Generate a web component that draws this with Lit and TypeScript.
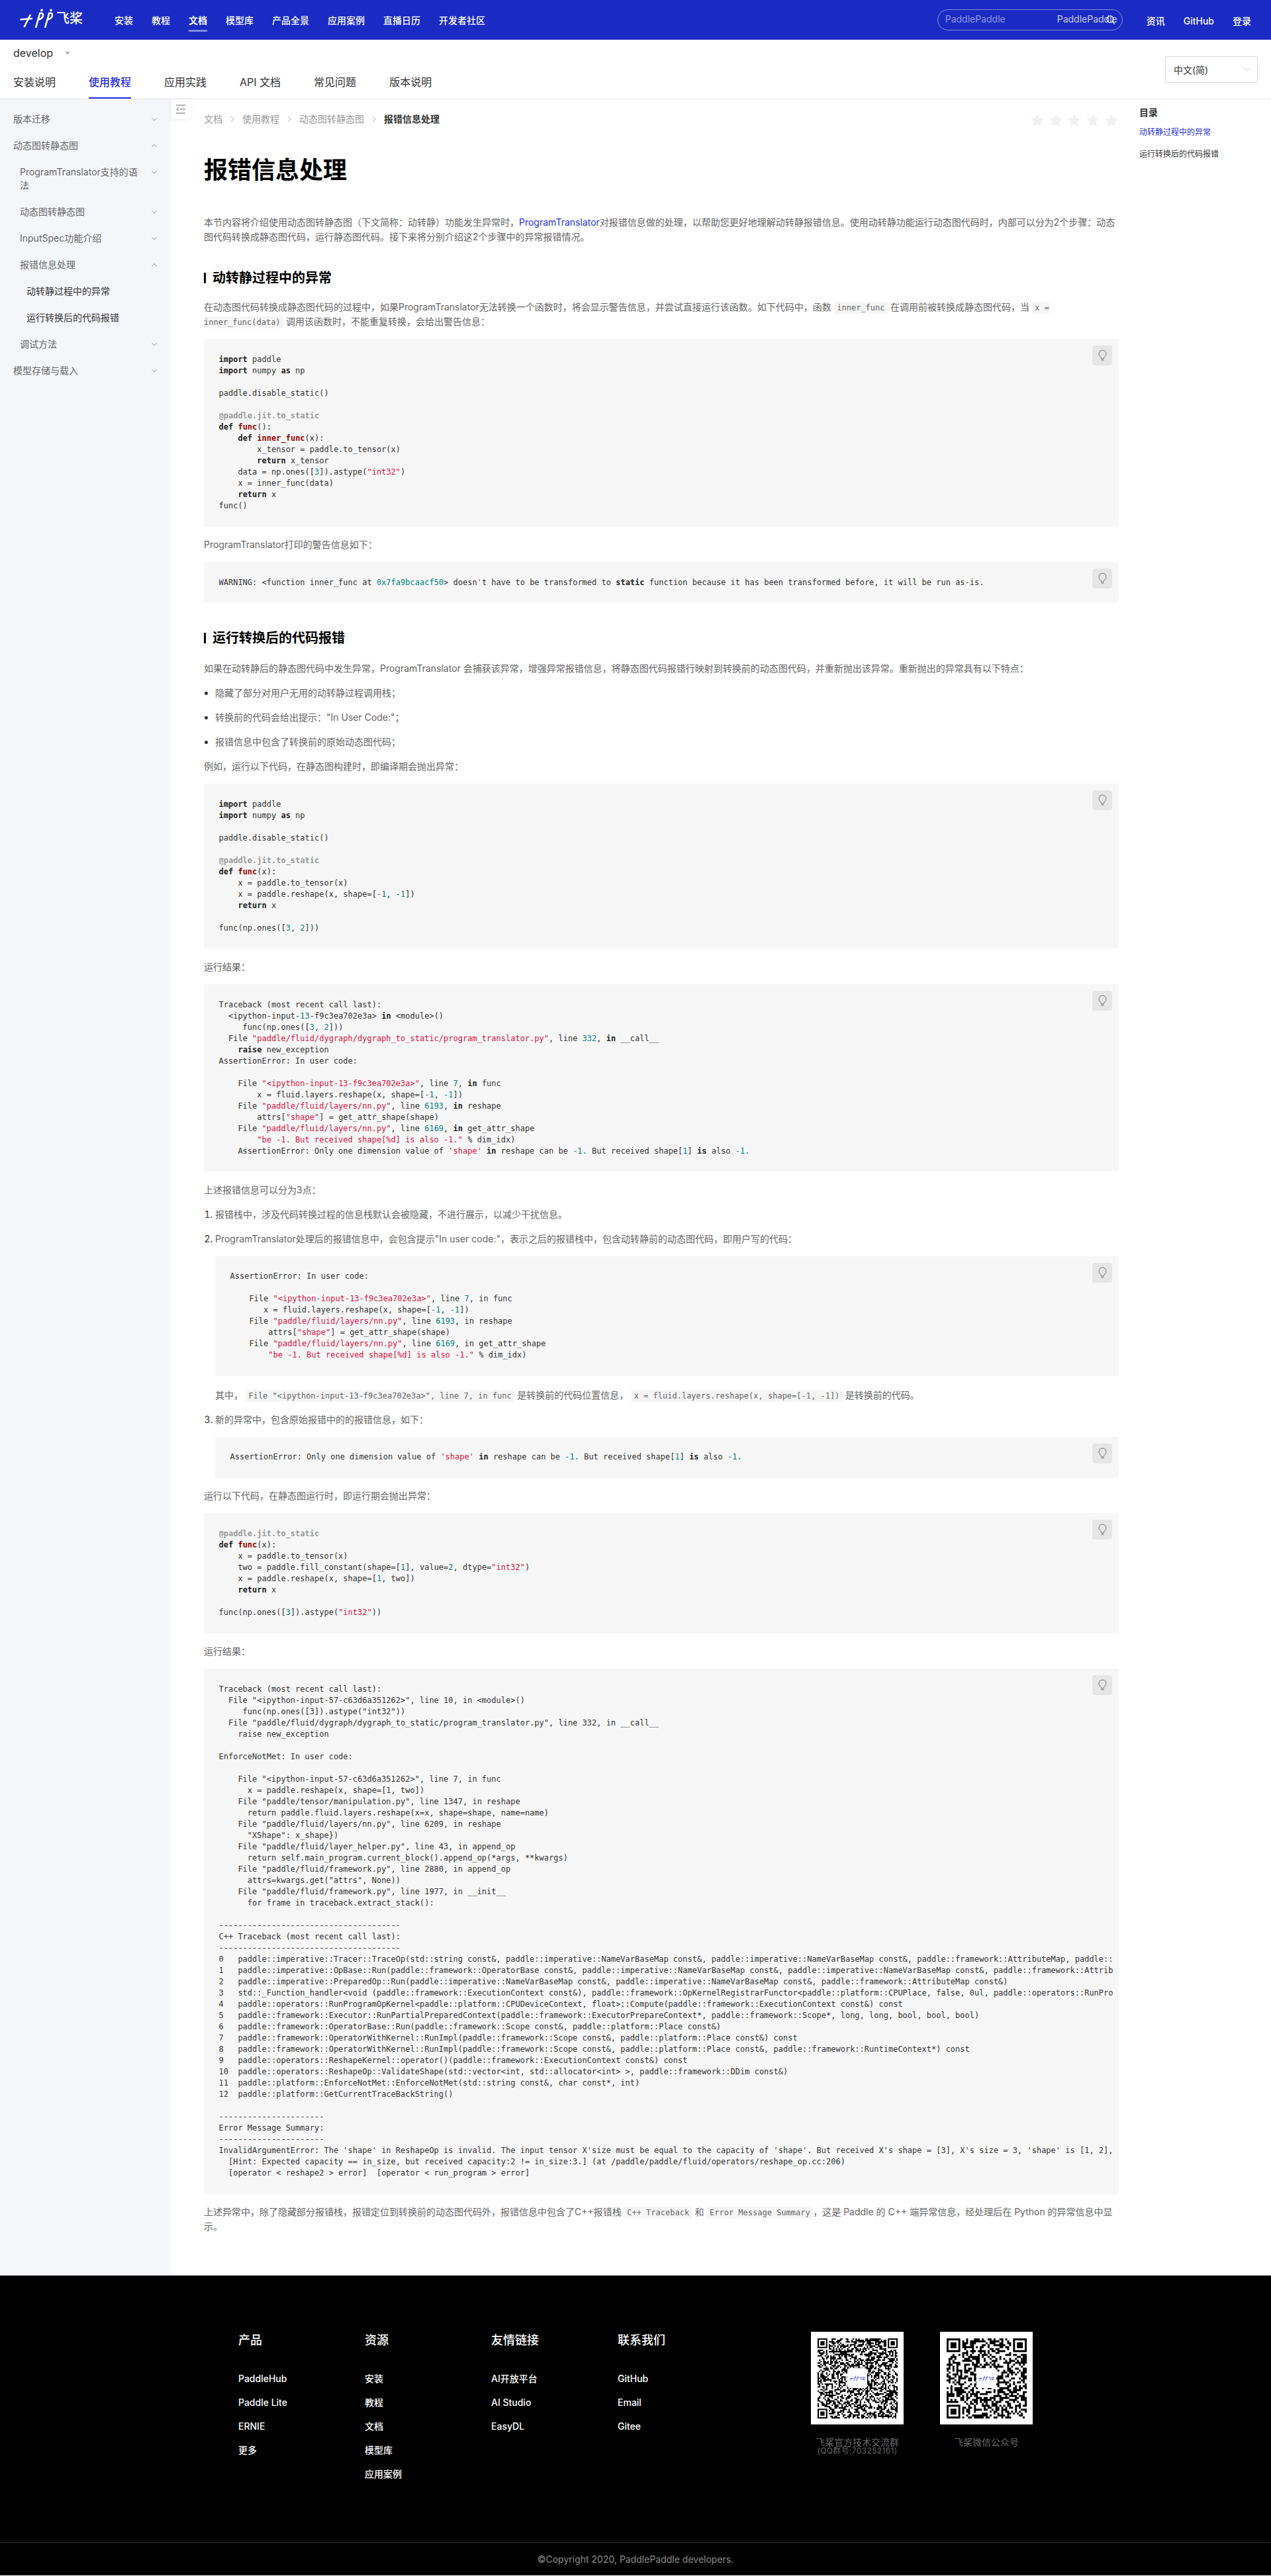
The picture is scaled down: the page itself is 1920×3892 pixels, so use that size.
import { LitElement, html, css, svg } from "lit";
import { customElement } from "lit/decorators.js";

const hl = (src: string) => {
  const out: unknown[] = [];
  const re = /‹(\w)\|([^›]*)›/g;
  let last = 0;
  let m: RegExpExecArray | null;
  while ((m = re.exec(src))) {
    out.push(src.slice(last, m.index));
    out.push(html`<span class=${m[1]}>${m[2]}</span>`);
    last = m.index + m[0].length;
  }
  out.push(src.slice(last));
  return out;
};

const qrPath = (n: number, seed: number) => {
  let s = seed;
  const rnd = () => {
    s = (s + 0x6d2b79f5) | 0;
    let t = Math.imul(s ^ (s >>> 15), 1 | s);
    t = (t + Math.imul(t ^ (t >>> 7), 61 | t)) ^ t;
    return ((t ^ (t >>> 14)) >>> 0) / 4294967296;
  };
  const inFinder = (x: number, y: number, ox: number, oy: number) =>
    x >= ox - 1 && x <= ox + 7 && y >= oy - 1 && y <= oy + 7;
  const finderOn = (x: number, y: number, ox: number, oy: number) => {
    const dx = x - ox, dy = y - oy;
    if (dx < 0 || dy < 0 || dx > 6 || dy > 6) return false;
    const ring = dx === 0 || dy === 0 || dx === 6 || dy === 6;
    const core = dx >= 2 && dx <= 4 && dy >= 2 && dy <= 4;
    return ring || core;
  };
  const origins = [[0, 0], [n - 7, 0], [0, n - 7]];
  let d = "";
  for (let y = 0; y < n; y++) {
    for (let x = 0; x < n; x++) {
      const f = origins.find(([a, b]) => inFinder(x, y, a, b));
      const on = f ? finderOn(x, y, f[0], f[1]) : rnd() > 0.5;
      if (on) d += `M${x} ${y}h1v1h-1z`;
    }
  }
  return d;
};

const QR1 = qrPath(57, 7);
const QR2 = qrPath(41, 23);

const chev = (up = false) => html`<svg class="chev" viewBox="0 0 8 20" width="8" height="20"><path d=${up ? "M.5 12 4 8.500 7.500 12" : "M.5 8.500 4 12 7.500 8.500"} fill="none" stroke="#b5b8c0" stroke-width="1.200"/></svg>`;
const crumbSep = html`<svg viewBox="0 0 6 10" width="6" height="10"><path d="M1 1l4 4-4 4" fill="none" stroke="#aaa" stroke-width="1"/></svg>`;
const star = html`<svg viewBox="0 0 20 20" width="20" height="20"><path d="M10 .500l2.900 6.300 6.800.800-5 4.700 1.300 6.800-6-3.400-6 3.400 1.300-6.800-5-4.700 6.800-.800z" fill="#f0f0f0"/></svg>`;
const bulb = html`<svg viewBox="0 0 15 18" width="15" height="18"><path d="M7.500 1A5.500 5.500 0 0 0 4.300 11c.8.600 1.200 1.300 1.200 2.200v.8h4v-.8c0-.9.400-1.600 1.200-2.200A5.500 5.500 0 0 0 7.500 1z" fill="none" stroke="#777" stroke-width="1"/><path d="M5.500 16h4" stroke="#777" stroke-width="1.200"/></svg>`;

const CODE_1 = `‹k|import› paddle
‹k|import› numpy ‹k|as› np

paddle.disable_static()

‹d|@paddle.jit.to_static›
‹k|def› ‹f|func›():
    ‹k|def› ‹f|inner_func›(x):
        x_tensor = paddle.to_tensor(x)
        ‹k|return› x_tensor
    data = np.ones([‹n|3›]).astype(‹s|"int32"›)
    x = inner_func(data)
    ‹k|return› x
func()`;
const CODE_2 = `WARNING: <function inner_func at ‹n|0x7fa9bcaacf50›> doesn‹s|'›t have to be transformed to ‹k|static› function because it has been transformed before, it will be run as-is.`;
const CODE_3 = `‹k|import› paddle
‹k|import› numpy ‹k|as› np

paddle.disable_static()

‹d|@paddle.jit.to_static›
‹k|def› ‹f|func›(x):
    x = paddle.to_tensor(x)
    x = paddle.reshape(x, shape=[‹n|-1›, ‹n|-1›])
    ‹k|return› x

func(np.ones([‹n|3›, ‹n|2›]))`;
const CODE_4 = `Traceback (most recent call last):
  <ipython-input-‹n|13›-f9c3ea702e3a> ‹k|in› <module>()
     func(np.ones([‹n|3›, ‹n|2›]))
  File ‹s|"paddle/fluid/dygraph/dygraph_to_static/program_translator.py"›, line ‹n|332›, ‹k|in› __call__
    ‹k|raise› new_exception
AssertionError: In user code:

    File ‹s|"<ipython-input-13-f9c3ea702e3a>"›, line ‹n|7›, ‹k|in› func
        x = fluid.layers.reshape(x, shape=[‹n|-1›, ‹n|-1›])
    File ‹s|"paddle/fluid/layers/nn.py"›, line ‹n|6193›, ‹k|in› reshape
        attrs[‹s|"shape"›] = get_attr_shape(shape)
    File ‹s|"paddle/fluid/layers/nn.py"›, line ‹n|6169›, ‹k|in› get_attr_shape
        ‹s|"be -1. But received shape[%d] is also -1."› % dim_idx)
    AssertionError: Only one dimension value of ‹s|'shape'› ‹k|in› reshape can be ‹n|-1.› But received shape[‹n|1›] ‹k|is› also ‹n|-1.›`;
const CODE_5 = `AssertionError: In user code:

    File ‹s|"<ipython-input-13-f9c3ea702e3a>"›, line ‹n|7›, in func
       x = fluid.layers.reshape(x, shape=[‹n|-1›, ‹n|-1›])
    File ‹s|"paddle/fluid/layers/nn.py"›, line ‹n|6193›, in reshape
        attrs[‹s|"shape"›] = get_attr_shape(shape)
    File ‹s|"paddle/fluid/layers/nn.py"›, line ‹n|6169›, in get_attr_shape
        ‹s|"be -1. But received shape[%d] is also -1."› % dim_idx)`;
const CODE_6 = `AssertionError: Only one dimension value of ‹s|'shape'› ‹k|in› reshape can be ‹n|-1.› But received shape[‹n|1›] ‹k|is› also ‹n|-1.›`;
const CODE_7 = `‹d|@paddle.jit.to_static›
‹k|def› ‹f|func›(x):
    x = paddle.to_tensor(x)
    two = paddle.fill_constant(shape=[‹n|1›], value=‹n|2›, dtype=‹s|"int32"›)
    x = paddle.reshape(x, shape=[‹n|1›, two])
    ‹k|return› x

func(np.ones([‹n|3›]).astype(‹s|"int32"›))`;
const CODE_8 = `Traceback (most recent call last):
  File "<ipython-input-57-c63d6a351262>", line 10, in <module>()
     func(np.ones([3]).astype("int32"))
  File "paddle/fluid/dygraph/dygraph_to_static/program_translator.py", line 332, in __call__
    raise new_exception

EnforceNotMet: In user code:

    File "<ipython-input-57-c63d6a351262>", line 7, in func
      x = paddle.reshape(x, shape=[1, two])
    File "paddle/tensor/manipulation.py", line 1347, in reshape
      return paddle.fluid.layers.reshape(x=x, shape=shape, name=name)
    File "paddle/fluid/layers/nn.py", line 6209, in reshape
      "XShape": x_shape})
    File "paddle/fluid/layer_helper.py", line 43, in append_op
      return self.main_program.current_block().append_op(*args, **kwargs)
    File "paddle/fluid/framework.py", line 2880, in append_op
      attrs=kwargs.get("attrs", None))
    File "paddle/fluid/framework.py", line 1977, in __init__
      for frame in traceback.extract_stack():

--------------------------------------
C++ Traceback (most recent call last):
--------------------------------------
0   paddle::imperative::Tracer::TraceOp(std::string const&, paddle::imperative::NameVarBaseMap const&, paddle::imperative::NameVarBaseMap const&, paddle::framework::AttributeMap, paddle::platform::Place, bool)
1   paddle::imperative::OpBase::Run(paddle::framework::OperatorBase const&, paddle::imperative::NameVarBaseMap const&, paddle::imperative::NameVarBaseMap const&, paddle::framework::AttributeMap const&, paddle::platform::Place const&)
2   paddle::imperative::PreparedOp::Run(paddle::imperative::NameVarBaseMap const&, paddle::imperative::NameVarBaseMap const&, paddle::framework::AttributeMap const&)
3   std::_Function_handler<void (paddle::framework::ExecutionContext const&), paddle::framework::OpKernelRegistrarFunctor<paddle::platform::CPUPlace, false, 0ul, paddle::operators::RunProgramOpKernel<paddle::platform::CPUDeviceContext, float> >::operator()(char const*, char const*, int) const
4   paddle::operators::RunProgramOpKernel<paddle::platform::CPUDeviceContext, float>::Compute(paddle::framework::ExecutionContext const&) const
5   paddle::framework::Executor::RunPartialPreparedContext(paddle::framework::ExecutorPrepareContext*, paddle::framework::Scope*, long, long, bool, bool, bool)
6   paddle::framework::OperatorBase::Run(paddle::framework::Scope const&, paddle::platform::Place const&)
7   paddle::framework::OperatorWithKernel::RunImpl(paddle::framework::Scope const&, paddle::platform::Place const&) const
8   paddle::framework::OperatorWithKernel::RunImpl(paddle::framework::Scope const&, paddle::platform::Place const&, paddle::framework::RuntimeContext*) const
9   paddle::operators::ReshapeKernel::operator()(paddle::framework::ExecutionContext const&) const
10  paddle::operators::ReshapeOp::ValidateShape(std::vector<int, std::allocator<int> >, paddle::framework::DDim const&)
11  paddle::platform::EnforceNotMet::EnforceNotMet(std::string const&, char const*, int)
12  paddle::platform::GetCurrentTraceBackString()

----------------------
Error Message Summary:
----------------------
InvalidArgumentError: The 'shape' in ReshapeOp is invalid. The input tensor X'size must be equal to the capacity of 'shape'. But received X's shape = [3], X's size = 3, 'shape' is [1, 2], the capacity of 'shape' is 2.
  [Hint: Expected capacity == in_size, but received capacity:2 != in_size:3.] (at /paddle/paddle/fluid/operators/reshape_op.cc:206)
  [operator < reshape2 > error]  [operator < run_program > error]`;

const NAV = ["安装", "教程", "文档", "模型库", "产品全景", "应用案例", "直播日历", "开发者社区"];
const TABS = ["安装说明", "使用教程", "应用实践", "API 文档", "常见问题", "版本说明"];
const SIDE: { t: string; l: number; up?: boolean; none?: boolean; dark?: boolean }[] = [
  { t: "版本迁移", l: 1 },
  { t: "动态图转静态图", l: 1, up: true },
  { t: "ProgramTranslator支持的语法", l: 2 },
  { t: "动态图转静态图", l: 2 },
  { t: "InputSpec功能介绍", l: 2 },
  { t: "报错信息处理", l: 2, up: true },
  { t: "动转静过程中的异常", l: 3, none: true, dark: true },
  { t: "运行转换后的代码报错", l: 3, none: true, dark: true },
  { t: "调试方法", l: 2 },
  { t: "模型存储与载入", l: 1 },
];
const FOOT = [
  { h: "产品", items: ["PaddleHub", "Paddle Lite", "ERNIE", "更多"] },
  { h: "资源", items: ["安装", "教程", "文档", "模型库", "应用案例"] },
  { h: "友情链接", items: ["AI开放平台", "AI Studio", "EasyDL"] },
  { h: "联系我们", items: ["GitHub", "Email", "Gitee"] },
];

const logoMark = (color: string, w: number, h: number) => html`<svg viewBox="0 0 50 30" width=${w} height=${h}>
  <g fill="none" stroke=${color} stroke-width="2.600">
    <path d="M.5 16.500 L19 15"/>
    <path d="M6.500 28 L16 9"/>
    <path d="M24 29 L30 8"/>
    <path d="M29 7.500 C37 4 38 14 27 17"/>
    <path d="M38 29 L44 8"/>
    <path d="M43 7.500 C51 4 52 14 41 17"/>
  </g>
  <circle cx="33" cy="2.500" r="1.900" fill=${color}/>
  <circle cx="47" cy="2.500" r="1.900" fill=${color}/>
</svg>`;

const qrCard = (d: string, n: number, lines: string[]) => html`<div class="qr">
  <div class="qr-box">
    <svg class="qr-svg" viewBox="0 0 ${n} ${n}" width="121" height="121">${svg`<path d=${d} fill="#000"/>`}</svg>
    <div class="qr-logo">${logoMark("#2932e1", 14, 9)}<span class="qr-logo-t">飞桨</span></div>
  </div>
  <div class="qr-cap">${lines[0]}${lines[1] ? html`<div class="qr-sub">${lines[1]}</div>` : ""}</div>
</div>`;

const block = (src: string) => html`<div class="block"><pre>${hl(src)}</pre><div class="bulb">${bulb}</div></div>`;

@customElement("app-root")
export class AppRoot extends LitElement {
  static styles = css`
    :host { display: block; font-family: Inter, "Noto Sans CJK SC", sans-serif; font-size: 14px; color: #666; background: #fff; }
    * { box-sizing: border-box; }
    a { color: inherit; text-decoration: none; }

    .top { height: 60px; background: #1a2bc3; color: #fff; display: flex; align-items: flex-start; padding: 0 30px; }
    .logo { display: flex; align-items: center; gap: 5px; width: 95px; height: 56px; margin-right: 48px; }
    .logo-t { font-size: 20px; line-height: 30px; font-weight: 500; white-space: nowrap; }
    .nav { display: flex; gap: 28px; font-weight: 500; }
    .nav a { padding: 21px 0 4px; line-height: 20px; border-bottom: 3px solid transparent; }
    .nav a.on { border-bottom-color: rgba(255,255,255,.45); font-weight: 600; }
    .spacer { flex: 1; }
    .search { position: relative; width: 280px; height: 32px; margin-top: 14px; border: 1px solid rgba(255,255,255,.45); border-radius: 16px; margin-right: 36px; padding-left: 11px; line-height: 28px; color: rgba(255,255,255,.5); }
    .search-v { position: absolute; left: 180px; top: 0; line-height: 28px; color: #c9cbe0; }
    .search-i { position: absolute; left: 254px; top: 8px; }
    .right { display: flex; gap: 28px; font-weight: 500; padding-top: 22px; line-height: 20px; }

    .sub { height: 90px; display: flex; justify-content: space-between; border-bottom: 1px solid #e5e5e5; padding: 0 20px; }
    .ver { display: flex; align-items: center; height: 20px; margin: 10px 0 23px; font-size: 16px; color: #333; }
    .ver i { width: 0; height: 0; margin-left: 18px; border: 4px solid transparent; border-top: 5px solid #bbb; border-bottom: 0; }
    .tabs { display: flex; gap: 50px; font-size: 16px; color: #333; }
    .tabs a { height: 36px; line-height: 22px; border-bottom: 2px solid transparent; }
    .tabs a.on { color: #2932e1; border-bottom-color: #2932e1; font-weight: 500; }
    .lang { width: 140px; height: 40px; margin-top: 25px; border: 1px solid #d9d9d9; border-radius: 2px; display: flex; align-items: center; justify-content: space-between; padding: 0 10px 0 12px; color: #333; }

    .body { display: flex; align-items: stretch; }
    .side { width: 258px; flex: none; background: #f5f6fa; padding-top: 10px; position: relative; }
    .row { display: flex; align-items: flex-start; padding: 10px 21px 10px 20px; line-height: 20px; color: #666; }
    .row.l2 { padding-left: 30px; }
    .row.l3 { padding-left: 40px; }
    .row.dark { color: #333; }
    .row span { flex: 1; min-width: 0; }
    .chev { flex: none; margin-left: 19px; }
    .toggle { position: absolute; left: 258px; top: 0; width: 30px; height: 30px; background: #fff; border-radius: 0 0 4px 0; box-shadow: 0 1px 4px rgba(0,0,0,.1); display: flex; align-items: center; justify-content: center; }

    .main { width: 1432px; flex: none; padding: 20px 0 48px 50px; min-width: 0; }
    .crumbs { display: flex; justify-content: space-between; align-items: center; height: 20px; }
    .crumb { display: flex; align-items: center; gap: 12px; color: #999; line-height: 20px; }
    .crumb b { color: #333; font-weight: 600; }
    .stars { display: flex; gap: 8px; padding-right: 1px; padding-top: 3px; }
    h1 { margin: 42px 0 43px; font-size: 36px; line-height: 50px; font-weight: 700; color: #000; }
    h2 { margin: 37.500px 0 20px; font-size: 20px; line-height: 30px; font-weight: 600; color: #000; display: flex; align-items: center; gap: 10px; }
    h2.first { margin: 36px 0 18px; }
    h2::before { content: ""; width: 3px; height: 16px; background: #000; flex: none; }
    p { margin: 0 0 15px; line-height: 22px; }
    p.where { padding-top: 1px; }
    p a { color: #2932e1; }
    ul, ol { margin: 0; padding: 0 0 0 17px; }
    li { margin: 0 0 15px; line-height: 22px; }
    li::marker { color: #333; }
    code { font-family: "DejaVu Sans Mono", monospace; font-size: 12px; line-height: 1; background: #f5f5f5; border-radius: 3px; padding: 2px 4.500px; color: #666; }

    .block { position: relative; background: #f7f7f7; margin: 15px 0 16.400px; padding: 22.750px 9px 22.750px 22.500px; }
    pre { margin: 0; overflow: hidden; font-family: "DejaVu Sans Mono", monospace; font-size: 12px; line-height: 17px; color: #333; white-space: pre; }
    .k { font-weight: 700; color: #222; }
    .f { font-weight: 700; color: #990000; }
    .d { font-weight: 700; color: #999; }
    .s { color: #dd1144; }
    .n { color: #008080; }
    .bulb { position: absolute; top: 10px; right: 10px; width: 30px; height: 30px; border-radius: 4px; background: #e6e6e6; display: flex; align-items: center; justify-content: center; }

    .toc { flex: 1; padding: 10px 0 0 31px; font-size: 12px; color: #333; }
    .toc-h { font-size: 14px; font-weight: 600; line-height: 20px; margin-bottom: 10px; }
    .toc a { display: block; line-height: 20px; margin-bottom: 13px; }
    .toc a.on { color: #2932e1; }

    .foot { background: #000; color: #fff; }
    .foot-main { height: 404px; padding: 85px 0 0 360px; display: flex; border-bottom: 1px solid #333; }
    .cols { display: flex; width: 865px; }
    .col { width: 191px; }
    .col-h { font-size: 18px; line-height: 26px; font-weight: 500; margin-bottom: 35px; }
    .col a { display: block; line-height: 20px; margin-bottom: 16px; font-weight: 500; }
    .qr { width: 140px; margin-right: 55px; text-align: center; }
    .qr-box { position: relative; width: 140px; height: 140px; background: #fff; display: flex; align-items: center; justify-content: center; }
    .qr-svg { filter: blur(.35px); }
    .qr-logo { position: absolute; left: 55px; top: 55px; width: 30px; height: 30px; background: #fff; border-radius: 4px; box-shadow: 0 0 2px rgba(0,0,0,.25); display: flex; align-items: center; justify-content: center; }
    .qr-logo-t { font-size: 5px; line-height: 9px; color: #2932e1; }
    .qr-cap { margin-top: 20px; color: #666; font-size: 14px; line-height: 13px; white-space: nowrap; }
    .qr-sub { font-size: 12px; letter-spacing: .35px; }
    .copy { height: 48.500px; line-height: 49px; text-align: center; color: #8c8c8c; }
  `;

  render() {
    return html`
      <div class="top">
        <div class="logo">${logoMark("#fff", 50, 30)}<span class="logo-t">飞桨</span></div>
        <nav class="nav">${NAV.map((n) => html`<a class=${n === "文档" ? "on" : ""}>${n}</a>`)}</nav>
        <div class="spacer"></div>
        <div class="search">PaddlePaddle
          <span class="search-v">PaddlePaddle</span>
          <svg class="search-i" viewBox="0 0 14 15" width="14" height="15"><circle cx="6" cy="6" r="5" fill="none" stroke="#fff" stroke-width="1.200"/><path d="M9.700 9.800 13 13.500" stroke="#fff" stroke-width="1.200"/></svg>
        </div>
        <div class="right"><a>资讯</a><a>GitHub</a><a>登录</a></div>
      </div>
      <div class="sub">
        <div>
          <div class="ver">develop<i></i></div>
          <div class="tabs">${TABS.map((t) => html`<a class=${t === "使用教程" ? "on" : ""}>${t}</a>`)}</div>
        </div>
        <div class="lang">中文(简)<svg viewBox="0 0 12 8" width="11" height="8"><path d="M1 1l5 6 5-6" fill="none" stroke="#ccc" stroke-width="1"/></svg></div>
      </div>
      <div class="body">
        <aside class="side">
          ${SIDE.map((s) => html`<div class="row l${s.l} ${s.dark ? "dark" : ""}"><span>${s.t}</span>${s.none ? "" : chev(s.up)}</div>`)}
          <div class="toggle"><svg viewBox="0 0 14 14" width="14" height="14"><path d="M0 1h14M6 7h8M0 13h14" stroke="#999" stroke-width="1.500"/><path d="M4 4.500 1 7l3 2.500" fill="none" stroke="#999" stroke-width="1.200"/></svg></div>
        </aside>
        <main class="main">
          <div class="crumbs">
            <div class="crumb"><span>文档</span>${crumbSep}<span>使用教程</span>${crumbSep}<span>动态图转静态图</span>${crumbSep}<b>报错信息处理</b></div>
            <div class="stars">${[1, 2, 3, 4, 5].map(() => star)}</div>
          </div>
          <h1>报错信息处理</h1>
          <p>本节内容将介绍使用动态图转静态图（下文简称：动转静）功能发生异常时，<a>ProgramTranslator</a>对报错信息做的处理，以帮助您更好地理解动转静报错信息。使用动转静功能运行动态图代码时，内部可以分为2个步骤：动态图代码转换成静态图代码，运行静态图代码。接下来将分别介绍这2个步骤中的异常报错情况。</p>
          <h2 class="first">动转静过程中的异常</h2>
          <p>在动态图代码转换成静态图代码的过程中，如果ProgramTranslator无法转换一个函数时，将会显示警告信息，并尝试直接运行该函数。如下代码中，函数 <code>inner_func</code> 在调用前被转换成静态图代码，当 <code>x = inner_func(data)</code> 调用该函数时，不能重复转换，会给出警告信息：</p>
          ${block(CODE_1)}
          <p>ProgramTranslator打印的警告信息如下：</p>
          ${block(CODE_2)}
          <h2>运行转换后的代码报错</h2>
          <p>如果在动转静后的静态图代码中发生异常，ProgramTranslator 会捕获该异常，增强异常报错信息，将静态图代码报错行映射到转换前的动态图代码，并重新抛出该异常。重新抛出的异常具有以下特点：</p>
          <ul>
            <li>隐藏了部分对用户无用的动转静过程调用栈；</li>
            <li>转换前的代码会给出提示："In User Code:"；</li>
            <li>报错信息中包含了转换前的原始动态图代码；</li>
          </ul>
          <p>例如，运行以下代码，在静态图构建时，即编译期会抛出异常：</p>
          ${block(CODE_3)}
          <p>运行结果：</p>
          ${block(CODE_4)}
          <p>上述报错信息可以分为3点：</p>
          <ol>
            <li>报错栈中，涉及代码转换过程的信息栈默认会被隐藏，不进行展示，以减少干扰信息。</li>
            <li>ProgramTranslator处理后的报错信息中，会包含提示"In user code:"，表示之后的报错栈中，包含动转静前的动态图代码，即用户写的代码：
              ${block(CODE_5)}
              <p class="where">其中， <code>File "&lt;ipython-input-13-f9c3ea702e3a&gt;", line 7, in func</code> 是转换前的代码位置信息， <code>x = fluid.layers.reshape(x, shape=[-1, -1])</code> 是转换前的代码。</p>
            </li>
            <li>新的异常中，包含原始报错中的的报错信息，如下：
              ${block(CODE_6)}
            </li>
          </ol>
          <p>运行以下代码，在静态图运行时，即运行期会抛出异常：</p>
          ${block(CODE_7)}
          <p>运行结果：</p>
          ${block(CODE_8)}
          <p>上述异常中，除了隐藏部分报错栈，报错定位到转换前的动态图代码外，报错信息中包含了C++报错栈 <code>C++ Traceback</code> 和 <code>Error Message Summary</code>，这是 Paddle 的 C++ 端异常信息，经处理后在 Python 的异常信息中显示。</p>
        </main>
        <aside class="toc">
          <div class="toc-h">目录</div>
          <a class="on">动转静过程中的异常</a>
          <a>运行转换后的代码报错</a>
        </aside>
      </div>
      <footer class="foot">
        <div class="foot-main">
          <div class="cols">
            ${FOOT.map((c) => html`<div class="col"><div class="col-h">${c.h}</div>${c.items.map((i) => html`<a>${i}</a>`)}</div>`)}
          </div>
          ${qrCard(QR1, 57, ["飞桨官方技术交流群", "(QQ群号:703252161)"])}
          ${qrCard(QR2, 41, ["飞桨微信公众号"])}
        </div>
        <div class="copy">©Copyright 2020, PaddlePaddle developers.</div>
      </footer>
    `;
  }
}
